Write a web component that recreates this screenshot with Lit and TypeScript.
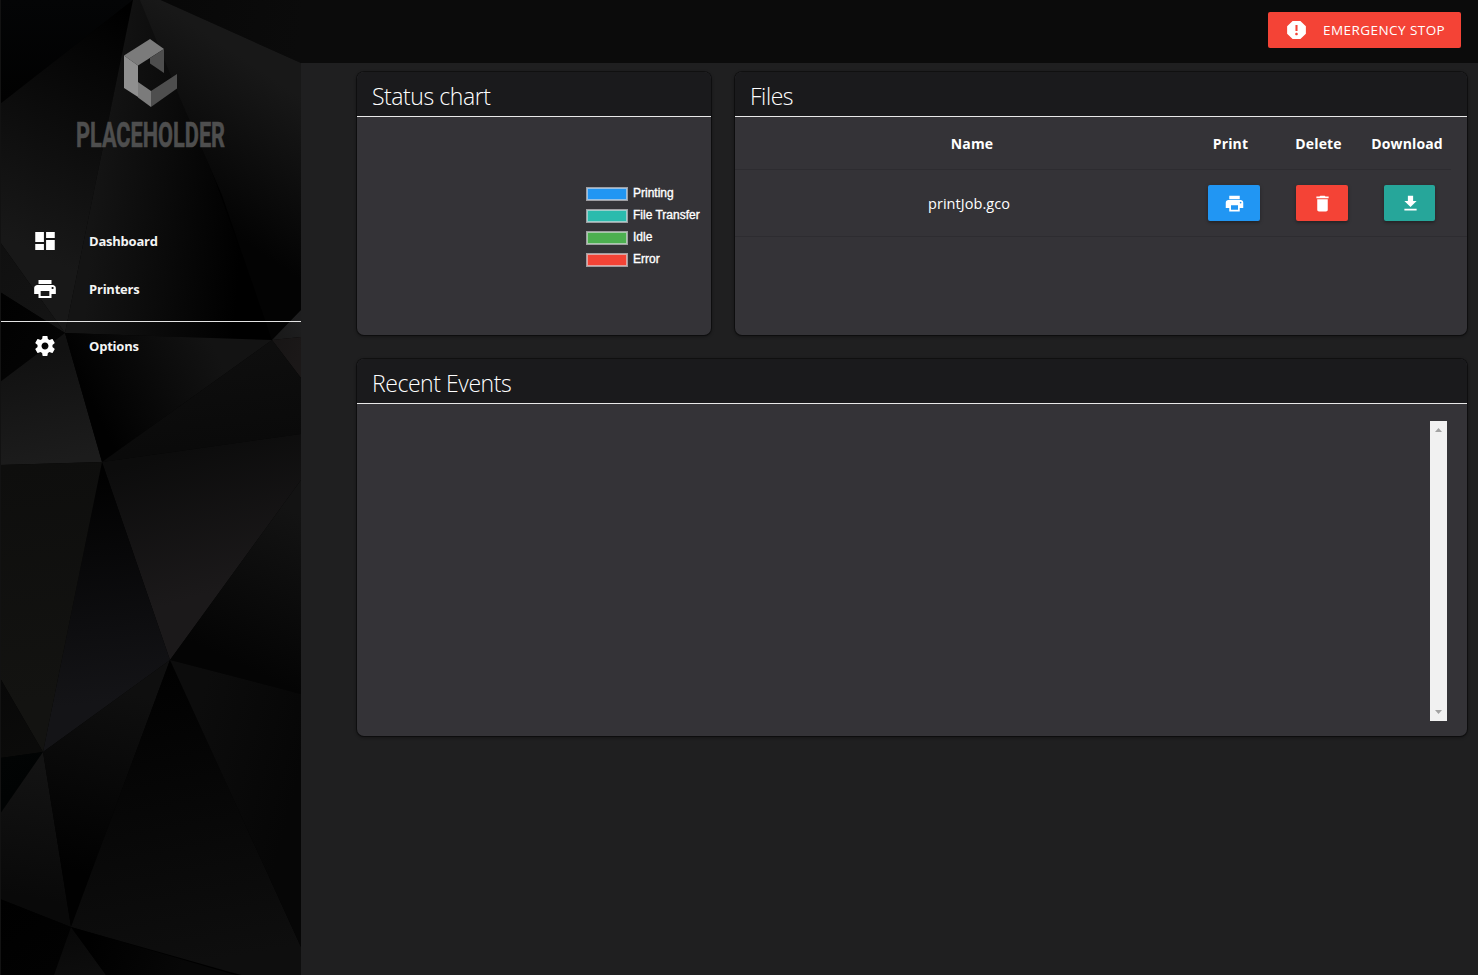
import { LitElement, html, svg, css } from "lit";
import { customElement, property } from "lit/decorators.js";

const ICONS: Record<string, string> = {
  dashboard: "M3 13h8V3H3v10zm0 8h8v-6H3v6zm10 0h8V11h-8v10zm0-18v6h8V3h-8z",
  print:
    "M19 8H5c-1.66 0-3 1.34-3 3v6h4v4h12v-4h4v-6c0-1.66-1.34-3-3-3zm-3 11H8v-5h8v5zm3-7c-.55 0-1-.45-1-1s.45-1 1-1 1 .45 1 1-.45 1-1 1zm-1-9H6v4h12V3z",
  settings:
    "M19.43 12.98c.04-.32.07-.64.07-.98s-.03-.66-.07-.98l2.11-1.65c.19-.15.24-.42.12-.64l-2-3.46c-.12-.22-.39-.3-.61-.22l-2.49 1c-.52-.4-1.08-.73-1.69-.98l-.38-2.65C14.46 2.18 14.25 2 14 2h-4c-.25 0-.46.18-.49.42l-.38 2.65c-.61.25-1.17.59-1.69.98l-2.49-1c-.23-.09-.49 0-.61.22l-2 3.46c-.13.22-.07.49.12.64l2.11 1.65c-.04.32-.07.65-.07.98s.03.66.07.98l-2.11 1.65c-.19.15-.24.42-.12.64l2 3.46c.12.22.39.3.61.22l2.49-1c.52.4 1.08.73 1.69.98l.38 2.65c.03.24.24.42.49.42h4c.25 0 .46-.18.49-.42l.38-2.65c.61-.25 1.17-.59 1.69-.98l2.49 1c.23.09.49 0 .61-.22l2-3.46c.12-.22.07-.49-.12-.64l-2.11-1.65zM12 15.5c-1.93 0-3.5-1.57-3.5-3.5s1.57-3.5 3.5-3.5 3.5 1.57 3.5 3.5-1.57 3.5-3.5 3.5z",
  report:
    "M15.73 3H8.27L3 8.27v7.46L8.27 21h7.46L21 15.73V8.27L15.73 3zM12 17.3c-.72 0-1.3-.58-1.3-1.3 0-.72.58-1.3 1.3-1.3.72 0 1.3.58 1.3 1.3 0 .72-.58 1.3-1.3 1.3zm1-4.3h-2V7h2v6z",
  delete: "M6 19c0 1.1.9 2 2 2h8c1.1 0 2-.9 2-2V7H6v12zM19 4h-3.5l-1-1h-5l-1 1H5v2h14V4z",
  download: "M19 9h-4V3H9v6H5l7 7 7-7zM5 18v2h14v-2H5z",
};

@customElement("md-icon")
export class MdIcon extends LitElement {
  @property() name = "";
  static styles = css`
    :host { display: block; width: 24px; height: 24px; }
    .glyph { display: block; width: 100%; height: 100%; fill: #fff; }
  `;
  render() {
    return html`<svg class="glyph" viewBox="0 0 24 24" preserveAspectRatio="none"><path d=${ICONS[this.name] ?? ""}></path></svg>`;
  }
}

// Each facet: polygon points, gradient start/end coordinates, start/end colour.
type Facet = [string, number[], string, string];
const FACETS: Facet[] = [
  ["133,0 301,0 301,63 154,-3", [133, 0, 301, 30], "#070707", "#0b0b0b"],
  ["0,0 133,0 0,104", [60, 0, 60, 100], "#040506", "#010101"],
  ["133,0 0,104 0,242 65,333", [125, 10, 10, 240], "#000000", "#181818"],
  ["0,242 65,333 0,292", [0, 250, 60, 333], "#101010", "#141414"],
  ["133,0 65,333 272,340 215,180 142,0", [92, 220, 242, 232], "#141414", "#000000"],
  ["140,0 154,-3 301,63 301,310 272,340 222,195 180,98", [205, 215, 290, 90], "#030303", "#181818"],
  ["0,292 65,333 0,382", [0, 300, 60, 340], "#010101", "#040404"],
  ["65,333 0,382 0,465 102,462", [30, 355, 50, 463], "#111111", "#1c1c1c"],
  ["65,333 272,340 102,462", [90, 400, 210, 340], "#010101", "#131313"],
  ["272,340 301,310 301,337", [272, 340, 301, 325], "#181818", "#1e1e1f"],
  ["272,340 301,337 301,378", [272, 340, 301, 350], "#171515", "#1b1818"],
  ["272,340 301,378 301,434 102,462", [250, 350, 260, 440], "#0e0e0e", "#0a0a0a"],
  ["102,462 301,434 301,480 170,660", [180, 450, 220, 590], "#0c0c0c", "#1b191a"],
  ["301,480 301,694 170,660", [290, 510, 220, 655], "#131313", "#040404"],
  ["102,462 170,660 43,752", [100, 475, 125, 700], "#010101", "#141417"],
  ["0,465 102,462 43,752 0,678", [20, 465, 50, 700], "#0e0e0d", "#131311"],
  ["0,678 43,752 0,758", [0, 680, 30, 750], "#080808", "#0b0b0a"],
  ["0,758 43,752 0,814", [0, 758, 20, 790], "#020404", "#010303"],
  ["43,752 0,814 0,899 71,927", [40, 765, 15, 895], "#131313", "#090909"],
  ["43,752 170,660 71,927", [120, 690, 70, 870], "#0f0f0f", "#010101"],
  ["170,660 71,927 230,972 301,990 301,947", [165, 670, 220, 960], "#010101", "#0e0e0e"],
  ["170,660 301,694 301,947", [190, 740, 301, 770], "#0c0c0c", "#060606"],
  ["0,899 71,927 54,975 0,975", [0, 900, 50, 975], "#000000", "#020202"],
  ["71,927 54,975 106,975", [70, 930, 80, 975], "#080808", "#0d0d0d"],
  ["71,927 106,975 235,975", [90, 940, 180, 975], "#000000", "#070707"],
];

@customElement("side-nav")
export class SideNav extends LitElement {
  static styles = css`
    :host { display: block; position: relative; width: 301px; height: 975px; background: #000; overflow: hidden; }
    .art { position: absolute; inset: 0; width: 301px; height: 975px; }
    .content { position: relative; padding-left: 1px; }
    .logo { display: block; width: 300px; height: 217px; overflow: visible; }
    .brand { font-family: Roboto, "Liberation Sans", sans-serif; font-weight: 700; font-size: 23px; fill: #4e4e4e; stroke: #4e4e4e; stroke-width: 0.4px; }
    .item { display: flex; align-items: center; height: 48px; }
    .slot { width: 88px; display: flex; justify-content: center; flex: none; }
    .wide { width: 26px; height: 24px; }
    .label { font: 700 13px/20px "Open Sans", "Noto Sans", sans-serif; letter-spacing: -0.22px; color: #f4f4f4; }
    .rule { height: 1px; background: #e4e4e4; margin: 8px 0 0; }
  `;
  render() {
    return html`
      <svg class="art" viewBox="0 0 301 975">
        <defs>
          ${FACETS.map(([, g, a, b], i) => svg`<linearGradient id=${"g" + i} gradientUnits="userSpaceOnUse" x1=${g[0]} y1=${g[1]} x2=${g[2]} y2=${g[3]}><stop offset="0" stop-color=${a}></stop><stop offset="1" stop-color=${b}></stop></linearGradient>`)}
        </defs>
        ${FACETS.map(([p], i) => svg`<polygon points=${p} fill=${`url(#g${i})`}></polygon>`)}
        <rect width="1" height="975" fill="#121212"></rect>
      </svg>
      <div class="content">
        <svg class="logo" viewBox="1 0 300 217">
          <polygon points="150,39 164,49 138,65.5 124,55.5" fill="#7b7b7b"></polygon>
          <polygon points="124,55.5 138,65.5 138,97 124,88" fill="#8f8f8f"></polygon>
          <polygon points="138,82 151,91 151,107 138,97.5" fill="#7b7b7b"></polygon>
          <polygon points="151,91 177,74 177,88.5 151,107" fill="#4e4e4e"></polygon>
          <polygon points="164,49 164,73 150,63.5 150,58" fill="#4e4e4e"></polygon>
          <text class="brand" x="76" y="0" transform="translate(0 147) scale(1 1.5)" textLength="149" lengthAdjust="spacingAndGlyphs">PLACEHOLDER</text>
        </svg>
        <div class="item"><span class="slot"><md-icon class="wide" name="dashboard"></md-icon></span><span class="label">Dashboard</span></div>
        <div class="item"><span class="slot"><md-icon class="wide" name="print"></md-icon></span><span class="label">Printers</span></div>
        <div class="rule"></div>
        <div class="item"><span class="slot"><md-icon name="settings"></md-icon></span><span class="label">Options</span></div>
      </div>
    `;
  }
}

const LEGEND = [
  ["Printing", "#2196f3"],
  ["File Transfer", "#2bbbad"],
  ["Idle", "#4caf50"],
  ["Error", "#f44336"],
];

@customElement("app-root")
export class AppRoot extends LitElement {
  static styles = css`
    :host { display: flex; width: 1478px; height: 975px; overflow: hidden; background: #1f1f20; color: #fff; font-family: "Open Sans", "Noto Sans", sans-serif; }
    * { box-sizing: border-box; }
    side-nav { flex: none; }
    .main { flex: 1; min-width: 0; }
    .top { height: 63px; background: #0b0b0b; padding: 12px 17px 0 0; display: flex; justify-content: flex-end; }
    .stop { width: 193px; height: 36px; border-radius: 2px; background: #f44336; display: flex; align-items: center; padding-left: 16px; }
    .stop md-icon { width: 25px; margin-right: 14px; }
    .stop span { font-size: 13.5px; line-height: 36px; letter-spacing: 0.44px; white-space: nowrap; }
    .grid { display: grid; grid-template-columns: 354px 732px; grid-template-rows: 263px 377px; gap: 24px; padding: 9px 0 0 56px; }
    .card { background: #343337; border-radius: 7px; overflow: hidden; box-shadow: 0 1px 3px 1px rgba(0,0,0,.3), 0 0 0 1px rgba(0,0,0,.4); }
    .full { grid-column: 1 / 3; }
    h2 { margin: 0; height: 45px; padding-left: 15px; background: #1a1a1c; border-bottom: 1px solid #e9e9e9; font-weight: 300; font-size: 23px; line-height: 48px; letter-spacing: -0.44px; }
    .legend { padding: 70px 0 0 229px; display: flex; flex-direction: column; gap: 8px; }
    .entry { display: flex; height: 14px; }
    .swatch { flex: none; width: 42px; height: 14px; margin-right: 5px; }
    .entry span { font: 12px/12px "Liberation Sans", Arial, sans-serif; -webkit-text-stroke: .35px #fff; white-space: nowrap; }
    .head { display: flex; width: 716px; height: 53px; border-bottom: 1px solid #2d2c30; font-weight: 700; font-size: 14px; line-height: 53px; letter-spacing: 0.13px; text-align: center; white-space: nowrap; }
    .c-name { width: 474px; }
    .c-print { width: 43px; }
    .c-delete { width: 133px; }
    .c-download { display: flex; justify-content: center; width: 46px; margin-left: -1px; }
    .c-download span { flex: none; }
    .body { display: grid; grid-template-columns: 473px 88px 88px 83px; align-items: center; height: 67px; border-bottom: 1px solid #2d2c30; }
    .file { font-size: 14.5px; letter-spacing: 0.05px; padding-right: 5px; text-align: center; }
    .btn { width: 52px; height: 36px; border-radius: 2px; display: flex; align-items: center; justify-content: center; box-shadow: 0 2px 2px rgba(0,0,0,.16), 0 1px 4px rgba(0,0,0,.2); }
    .btn md-icon { width: 21px; height: 21px; }
    .blue { background: #2196f3; }
    .red { background: #f44336; }
    .teal { background: #26a69a; width: 51px; padding-left: 1px; }
    .events { display: flex; justify-content: flex-end; padding: 17px 20px 0 0; }
    .bar { width: 17px; height: 300px; background: #f1f1f1; display: flex; flex-direction: column; justify-content: space-between; align-items: center; padding: 7px 0; }
    .arrow { display: block; width: 7px; height: 4px; fill: #a3a3a3; }
  `;
  render() {
    return html`
      <side-nav></side-nav>
      <div class="main">
        <div class="top"><div class="stop"><md-icon name="report"></md-icon><span>EMERGENCY STOP</span></div></div>
        <div class="grid">
          <section class="card">
            <h2>Status chart</h2>
            <div class="legend">
              ${LEGEND.map(([t, c]) => html`<div class="entry"><svg class="swatch" viewBox="0 0 42 14"><rect x="1" y="1" width="40" height="12" fill=${c} stroke="#d8d8dc" stroke-opacity=".65" stroke-width="2"></rect></svg><span>${t}</span></div>`)}
            </div>
          </section>
          <section class="card">
            <h2>Files</h2>
            <div class="head"><span class="c-name">Name</span><span class="c-print">Print</span><span class="c-delete">Delete</span><span class="c-download"><span>Download</span></span></div>
            <div class="body">
              <span class="file">printJob.gco</span>
              <span class="btn blue"><md-icon name="print"></md-icon></span>
              <span class="btn red"><md-icon name="delete"></md-icon></span>
              <span class="btn teal"><md-icon name="download"></md-icon></span>
            </div>
          </section>
          <section class="card full">
            <h2>Recent Events</h2>
            <div class="events">
              <div class="bar">
                <svg class="arrow" viewBox="0 0 7 4"><path d="M0 4L3.5 0L7 4z"></path></svg>
                <svg class="arrow" viewBox="0 0 7 4"><path d="M0 0L3.5 4L7 0z"></path></svg>
              </div>
            </div>
          </section>
        </div>
      </div>
    `;
  }
}
